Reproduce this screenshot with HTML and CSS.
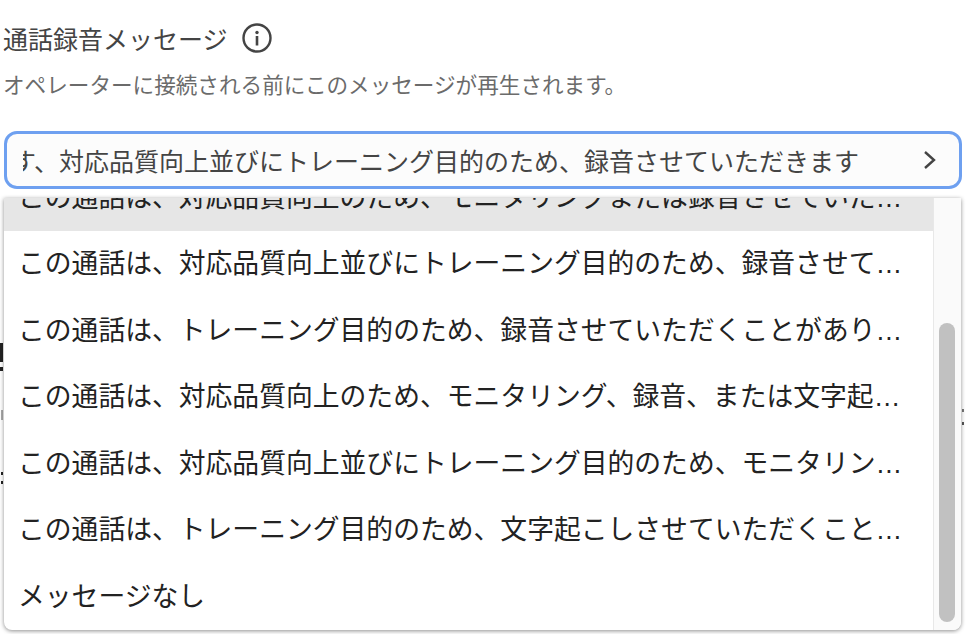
FILE: index.html
```html
<!DOCTYPE HTML>
<html lang="ja">
<head>
	<meta charset="UTF-8">
	<title>通話録音メッセージ</title>
	<link rel="stylesheet" href="styles.css">
</head>
<body>
	<div class="field">
		<div class="label-row">
			<span class="label">通話録音メッセージ</span>
			<svg class="info" viewBox="0 0 30 30" width="30" height="30">
				<circle cx="15" cy="15" r="13.5" fill="none" stroke="#444" stroke-width="2.4"/>
				<circle cx="15" cy="9.5" r="1.7" fill="#444"/>
				<rect x="13.7" y="13" width="2.6" height="9.5" fill="#444"/>
			</svg>
		</div>
		<p class="hint">オペレーターに接続される前にこのメッセージが再生されます。</p>
		<div class="select">
			<span class="select-text">す、対応品質向上並びにトレーニング目的のため、録音させていただきます</span>
			<svg class="chevron" viewBox="0 0 14 20" width="14" height="20">
				<path d="M2 2 L11 10 L2 18" fill="none" stroke="#444" stroke-width="2.4"/>
			</svg>
		</div>
	</div>

	<!-- bits of the page that stick out beside the open menu -->
	<div class="peek peek-a"></div>
	<div class="peek peek-b"></div>
	<div class="peek peek-c"></div>
	<div class="peek peek-d"></div>
	<div class="peek peek-e"></div>
	<div class="peek peek-f"></div>
	<div class="peek peek-g"></div>

	<div class="menu">
		<ul class="options">
			<li class="option selected">この通話は、対応品質向上のため、モニタリングまたは録音させていただきます</li>
			<li class="option">この通話は、対応品質向上並びにトレーニング目的のため、録音させていただきます</li>
			<li class="option">この通話は、トレーニング目的のため、録音させていただくことがあります</li>
			<li class="option">この通話は、対応品質向上のため、モニタリング、録音、または文字起こしさせていただきます</li>
			<li class="option">この通話は、対応品質向上並びにトレーニング目的のため、モニタリングさせていただきます</li>
			<li class="option">この通話は、トレーニング目的のため、文字起こしさせていただくことがあります</li>
			<li class="option">メッセージなし</li>
		</ul>
		<div class="scrollbar">
			<div class="thumb"></div>
		</div>
	</div>
</body>
</html>
```

FILE: styles.css
```css
html, body
{
	margin: 0;
	height: 100%;
}

body
{
	position: relative;
	overflow: hidden;
	background: #fff;
	font-family: "Noto Sans CJK JP", "Noto Sans", sans-serif;
}

.field
{
	padding: 20px 6px 0 3px;
}

.label-row
{
	display: flex;
	align-items: center;
	gap: 14px;
	height: 36px;
}

.label
{
	font-size: 25px;
	line-height: 36px;
	color: #444;
}

.info
{
	flex: none;
}

.hint
{
	margin: 13px 0 0;
	font-size: 21.6px;
	line-height: 30px;
	color: #6b6b6b;
}

.select
{
	display: flex;
	align-items: center;
	justify-content: space-between;
	box-sizing: border-box;
	height: 58px;
	margin: 32px 0 0 1px;
	padding: 0 22px 0 16px;
	border: 3px solid #6ea0f0;
	border-radius: 13px;
	background: #fcfcfc;
}

.select-text
{
	overflow: hidden;
	width: 840px;
	white-space: nowrap;
	text-indent: -12px;
	font-size: 25px;
	color: #444;
}

.peek
{
	position: absolute;
	background: #222;
}

.peek-a
{
	left: 0;
	top: 343px;
	width: 3px;
	height: 19px;
}

.peek-b
{
	left: 0;
	top: 367px;
	width: 3px;
	height: 4px;
}

.peek-c
{
	left: 1px;
	top: 410px;
	width: 2px;
	height: 10px;
	background: #aaa;
}

.peek-d
{
	left: 1px;
	top: 472px;
	width: 2px;
	height: 3px;
}

.peek-e
{
	left: 1px;
	top: 481px;
	width: 2px;
	height: 3px;
}

.peek-f
{
	left: 962px;
	top: 409px;
	width: 2px;
	height: 3px;
	background: #777;
}

.peek-g
{
	left: 962px;
	top: 422px;
	width: 2px;
	height: 3px;
	background: #555;
}

.menu
{
	position: absolute;
	left: 4px;
	top: 198px;
	display: flex;
	width: 957px;
	height: 432px;
	overflow: hidden;
	border-radius: 0 0 8px 8px;
	background: #fff;
	box-shadow: 0 1px 4px rgba(0, 0, 0, 0.45);
}

.options
{
	flex: 1;
	min-width: 0;
	margin: -33.5px 0 0;
	padding: 0;
	list-style: none;
	font-family: "Liberation Sans", "Noto Sans CJK JP", sans-serif;
}

.option
{
	box-sizing: border-box;
	height: 66.6px;
	padding: 0 25px 0 14px;
	overflow: hidden;
	white-space: nowrap;
	text-overflow: ellipsis;
	font-size: 26.8px;
	line-height: 66px;
	color: #222;
}

.selected
{
	background: #e6e6e6;
}

.scrollbar
{
	flex: none;
	width: 28px;
	box-sizing: border-box;
	padding: 125px 6px 8px 5px;
	background: #fafafa;
	border-left: 1px solid #e8e8e8;
}

.thumb
{
	height: 100%;
	border-radius: 8px;
	background: #c1c1c1;
}
```
